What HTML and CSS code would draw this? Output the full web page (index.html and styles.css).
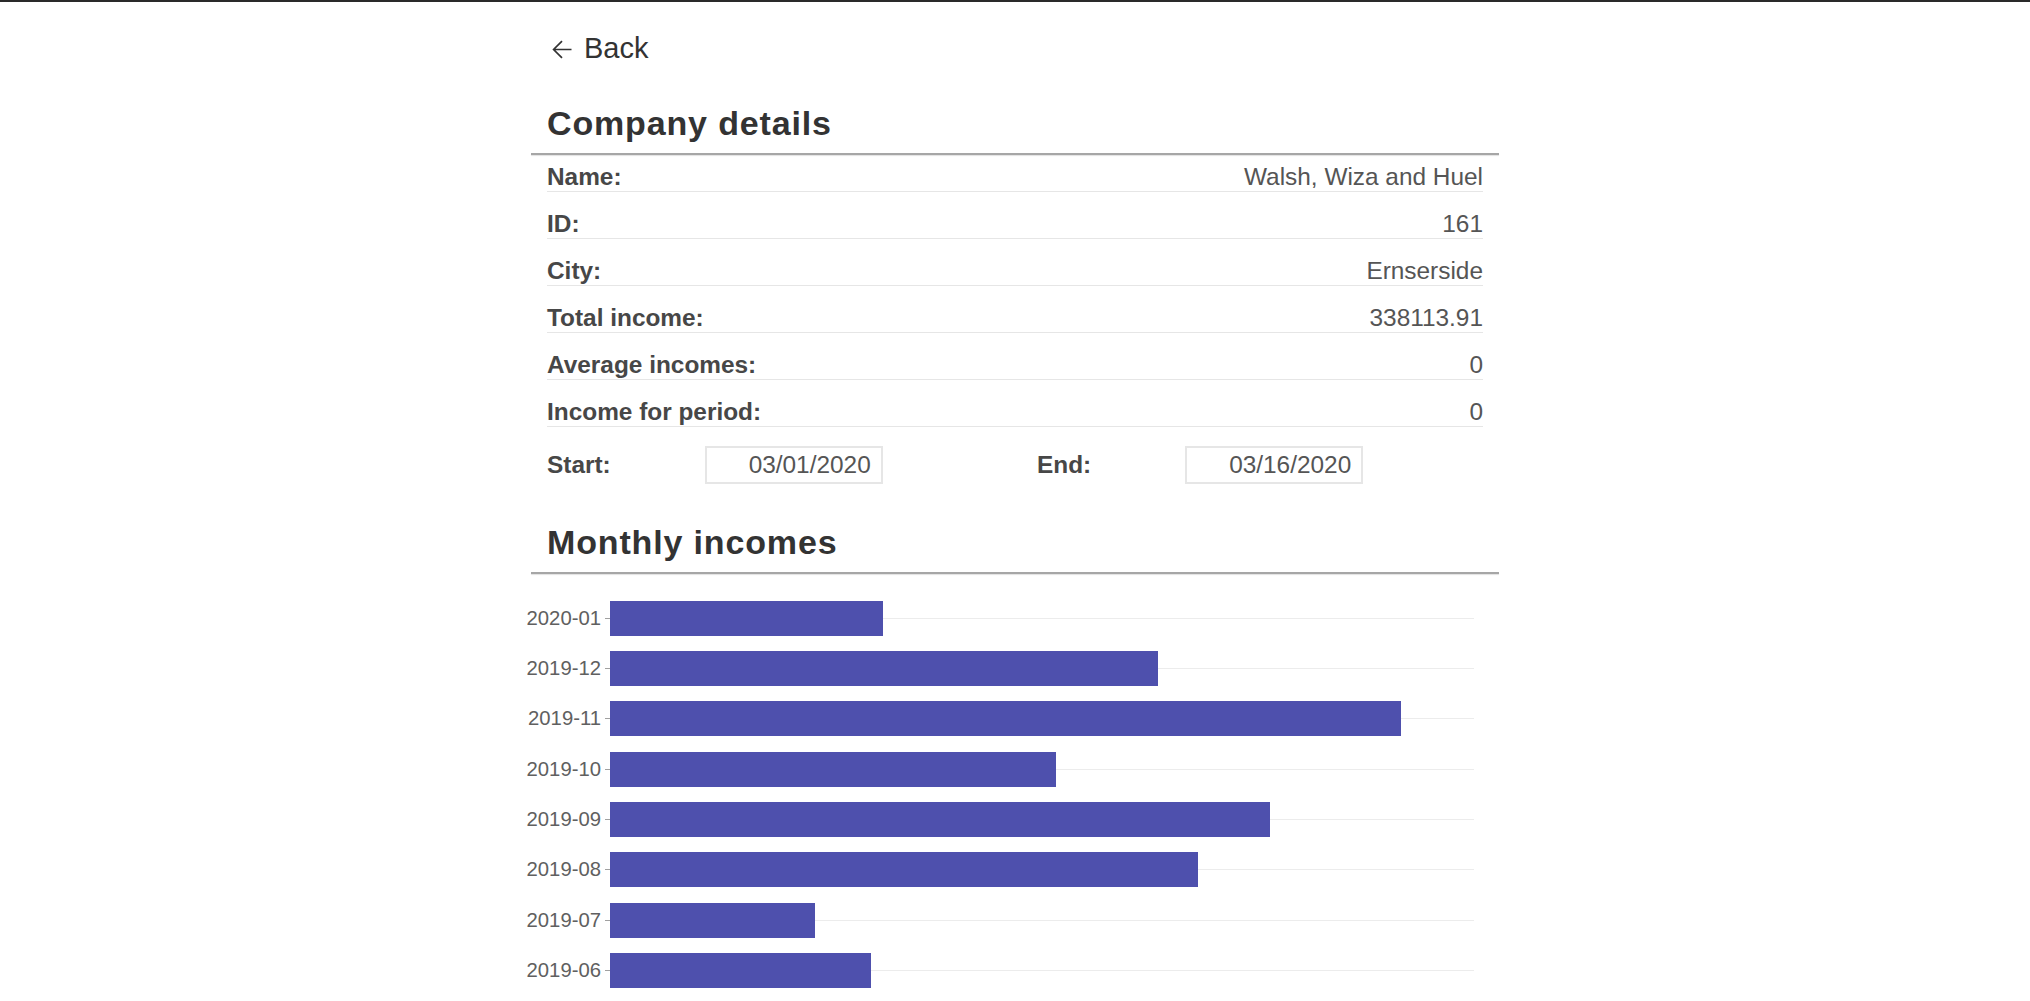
FILE: index.html
```html
<!DOCTYPE html>
<html lang="en">
<head>
<meta charset="utf-8">
<title>Company details</title>
<link rel="stylesheet" href="styles.css">
</head>
<body>
<div class="topbar"></div>
<main class="page">
  <a class="back" href="#">
    <svg class="back-icon" viewBox="0 0 20 19" width="20" height="19" aria-hidden="true">
      <path d="M19.5 9.5H2M10 1.2L1.6 9.5L10 17.8" fill="none" stroke="#333" stroke-width="1.7"/>
    </svg>
    <span>Back</span>
  </a>

  <h1 class="title">Company details</h1>
  <div class="rule"></div>

  <div class="details">
    <div class="row"><span class="key">Name:</span><span class="val">Walsh, Wiza and Huel</span></div>
    <div class="row"><span class="key">ID:</span><span class="val">161</span></div>
    <div class="row"><span class="key">City:</span><span class="val">Ernserside</span></div>
    <div class="row"><span class="key">Total income:</span><span class="val">338113.91</span></div>
    <div class="row"><span class="key">Average incomes:</span><span class="val">0</span></div>
    <div class="row"><span class="key">Income for period:</span><span class="val">0</span></div>
  </div>

  <div class="period">
    <div class="field"><span class="key">Start:</span><div class="date">03/01/2020</div></div>
    <div class="field"><span class="key">End:</span><div class="date">03/16/2020</div></div>
  </div>

  <h2 class="title title-2">Monthly incomes</h2>
  <div class="rule"></div>

  <div class="chart">
    <div class="bar-row"><span class="ylabel"><span>2020-01</span></span><span class="tick"></span><div class="track"><div class="bar" style="width:31.6%"></div></div></div>
    <div class="bar-row"><span class="ylabel"><span>2019-12</span></span><span class="tick"></span><div class="track"><div class="bar" style="width:63.4%"></div></div></div>
    <div class="bar-row"><span class="ylabel"><span>2019-11</span></span><span class="tick"></span><div class="track"><div class="bar" style="width:91.5%"></div></div></div>
    <div class="bar-row"><span class="ylabel"><span>2019-10</span></span><span class="tick"></span><div class="track"><div class="bar" style="width:51.6%"></div></div></div>
    <div class="bar-row"><span class="ylabel"><span>2019-09</span></span><span class="tick"></span><div class="track"><div class="bar" style="width:76.4%"></div></div></div>
    <div class="bar-row"><span class="ylabel"><span>2019-08</span></span><span class="tick"></span><div class="track"><div class="bar" style="width:68.1%"></div></div></div>
    <div class="bar-row"><span class="ylabel"><span>2019-07</span></span><span class="tick"></span><div class="track"><div class="bar" style="width:23.7%"></div></div></div>
    <div class="bar-row"><span class="ylabel"><span>2019-06</span></span><span class="tick"></span><div class="track"><div class="bar" style="width:30.2%"></div></div></div>
  </div>
</main>
</body>
</html>
```

FILE: styles.css
```css
* { box-sizing: border-box; }

html, body {
  margin: 0;
  padding: 0;
  background: #fff;
  font-family: "Liberation Sans", Arial, sans-serif;
  color: #333;
}

.topbar {
  height: 2px;
  background: #2a2a2a;
}

.page {
  width: 968px;
  margin: 0 auto;
  padding-bottom: 40px;
}

.back {
  display: flex;
  align-items: center;
  gap: 12px;
  margin: 30px 16px 0 21px;
  font-size: 29px;
  line-height: 32px;
  color: #333;
  text-decoration: none;
  width: max-content;
}

.back-icon {
  display: block;
  margin-top: 2px;
}

.title {
  margin: 40px 16px 11px;
  font-size: 34px;
  line-height: 38px;
  font-weight: 700;
  letter-spacing: 0.85px;
  color: #333;
}

.title-2 {
  margin-top: 39px;
}

.rule {
  height: 2px;
  background: #a6a6a6;
  box-shadow: 0 1px 1px rgba(0, 0, 0, 0.12);
}

.details {
  display: flex;
  flex-direction: column;
  gap: 10px;
  padding: 0 16px;
}

.row {
  display: flex;
  justify-content: space-between;
  align-items: baseline;
  padding-top: 8px;
  font-size: 24.4px;
  line-height: 28px;
  border-bottom: 1px solid #e6e6e6;
}

.key {
  font-weight: 700;
  color: #474747;
}

.val {
  color: #555;
  text-align: right;
}

.period {
  display: grid;
  grid-template-columns: 490px 1fr;
  margin-top: 19px;
  padding: 0 16px;
  font-size: 24.4px;
  line-height: 28px;
}

.field {
  display: flex;
  align-items: center;
  gap: 94px;
}

.date {
  width: 178px;
  height: 38px;
  border: 2px solid #e6e6e6;
  padding-right: 10px;
  text-align: right;
  line-height: 34px;
  color: #555;
}

.chart {
  padding: 19px 25px 0 0;
}

.bar-row {
  display: flex;
  align-items: center;
  height: 50.33px;
}

.ylabel {
  width: 70px;
  flex: none;
  display: flex;
  justify-content: flex-end;
  white-space: nowrap;
  font-size: 20.3px;
  color: #606060;
}

.tick {
  flex: none;
  width: 5px;
  height: 1px;
  margin-left: 4px;
  background: #a0a0a0;
}

.track {
  flex: 1;
  height: 35px;
  display: flex;
  align-items: center;
  background: linear-gradient(#ececec, #ececec) 0 50% / 100% 1px no-repeat;
}

.bar {
  height: 35px;
  background: #4e50ad;
}
```
